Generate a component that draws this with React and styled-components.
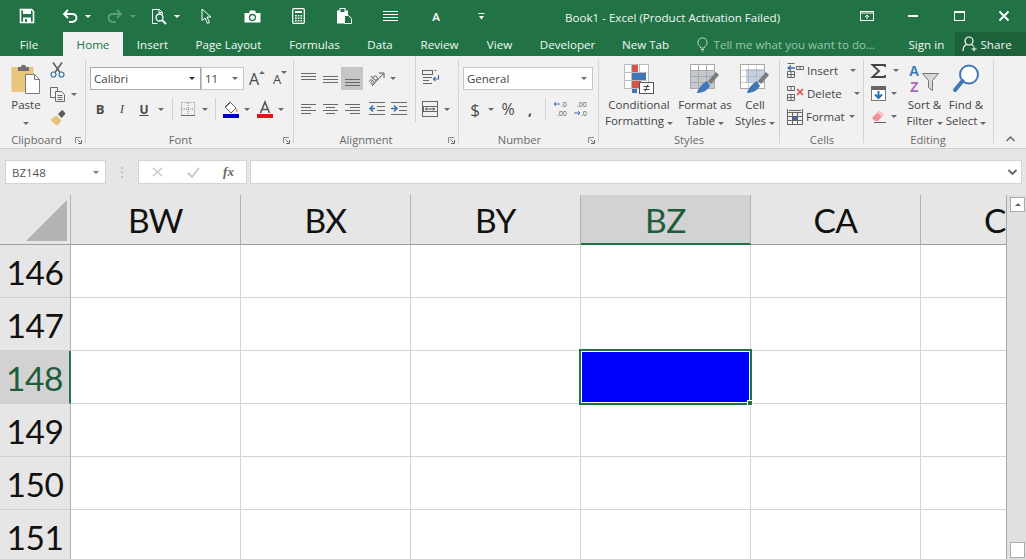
import React from "react";
import styled, { createGlobalStyle } from "styled-components";

const GlobalStyle = createGlobalStyle`
  html, body { margin: 0; padding: 0; background: #fff; overflow: hidden; }
  * { box-sizing: border-box; }
`;

const Page = styled.div`
  width: 1026px;
  height: 559px;
  display: flex;
  flex-direction: column;
  overflow: hidden;
  font-family: "Open Sans", "Noto Sans", sans-serif;
  font-size: 11.5px;
  color: #444;
`;

const TitleBar = styled.div`
  height: 32px;
  display: flex;
  align-items: center;
  background: #217346;
  padding-left: 4px;
  color: #fff;
`;

const Slot = styled.div`
  width: ${(p) => p.$w}px;
  margin-left: ${(p) => p.$ml || 0}px;
  flex: none;
  display: flex;
  justify-content: center;
  align-items: center;
  height: 100%;
  font-weight: ${(p) => (p.$bold ? 600 : 400)};
  font-size: ${(p) => p.$size || 12}px;
`;

const Title = styled.div`
  margin-left: 61px;
  font-size: 11.6px;
  white-space: nowrap;
  color: #f1f7f3;
  padding-top: 2px;
`;

const WindowButtons = styled.div`
  margin-left: auto;
  display: flex;
  height: 100%;
`;

const TabBar = styled.div`
  height: 24px;
  display: flex;
  align-items: stretch;
  background: #217346;
  color: #f2f7f4;
  font-size: 11.6px;
`;

const Tab = styled.div`
  width: ${(p) => p.$w}px;
  margin-left: ${(p) => p.$ml || 0}px;
  flex: none;
  display: flex;
  align-items: center;
  justify-content: center;
  white-space: nowrap;
  background: ${(p) => (p.$active ? "#f1f1f1" : "transparent")};
  color: ${(p) => (p.$active ? "#217346" : "inherit")};
`;

const TellMe = styled.div`
  width: 202px;
  margin-left: 14px;
  display: flex;
  align-items: center;
  gap: 6px;
  color: #9cc5ae;
  white-space: nowrap;
`;

const SignIn = styled.div`
  width: 46px;
  margin-left: 10px;
  display: flex;
  align-items: center;
  white-space: nowrap;
`;

const ShareButton = styled.div`
  flex: 1;
  display: flex;
  align-items: center;
  gap: 3px;
  padding-left: 7px;
  background: #1c6139;
  white-space: nowrap;
`;

const Ribbon = styled.div`
  height: 93px;
  display: flex;
  background: #f1f1f1;
  border-bottom: 1px solid #d0d0d0;
  box-shadow: 0 1px 1px #dcdcdc;
`;

const Group = styled.div`
  position: relative;
  width: ${(p) => p.$w}px;
  flex: none;
  display: flex;
  flex-direction: column;
  &::after {
    content: "";
    position: absolute;
    top: 4px;
    bottom: 5px;
    right: 0;
    width: 1px;
    background: #d3d3d3;
  }
`;

const GroupBody = styled.div`
  height: 76px;
  display: flex;
  padding-left: ${(p) => p.$pl || 0}px;
`;

const GroupFooter = styled.div`
  height: 16px;
  display: flex;
  align-items: center;
  padding-bottom: 2px;
  color: #6a6a6a;
  font-size: 11.2px;
`;

const GroupLabel = styled.div`
  flex: 1;
  text-align: center;
  padding-right: ${(p) => p.$pr || 0}px;
`;

const Launcher = styled.div`
  display: flex;
  margin-right: ${(p) => p.$mr || 4}px;
  margin-top: 2px;
`;

const Column = styled.div`
  display: flex;
  flex-direction: column;
  padding-top: ${(p) => p.$pt || 0}px;
  margin-left: ${(p) => p.$ml || 0}px;
  gap: ${(p) => p.$gap || 0}px;
  border-right: ${(p) => (p.$divider ? "1px solid #d3d3d3" : "none")};
  width: ${(p) => (p.$w ? `${p.$w}px` : "auto")};
  height: ${(p) => (p.$h ? `${p.$h}px` : "auto")};
`;

const Row = styled.div`
  display: flex;
  align-items: center;
  height: ${(p) => p.$h || 22}px;
  margin-top: ${(p) => p.$mt || 0}px;
`;

const Spot = styled.div`
  width: ${(p) => p.$w}px;
  height: ${(p) => (p.$fill ? "23px" : "auto")};
  flex: none;
  display: flex;
  align-items: center;
  justify-content: center;
  background: ${(p) => (p.$fill ? "#c6c6c6" : "transparent")};
  color: ${(p) => p.$color || "#4a4a4a"};
  font-size: ${(p) => p.$size || 12}px;
  font-weight: ${(p) => (p.$bold ? 700 : 400)};
  font-style: ${(p) => (p.$italic ? "italic" : "normal")};
  text-decoration: ${(p) => (p.$under ? "underline" : "none")};
  font-family: ${(p) => (p.$serif ? '"Liberation Serif", serif' : "inherit")};
`;

const Divider = styled.div`
  width: 1px;
  height: 22px;
  background: #d3d3d3;
  margin: 0 ${(p) => p.$m || 4}px;
`;

const Triangle = styled.span`
  display: inline-block;
  width: 0;
  height: 0;
  margin-left: ${(p) => p.$ml || 0}px;
  transform: translateY(${(p) => (p.$raise ? -p.$raise : 0)}px);
  border-left: 3px solid transparent;
  border-right: 3px solid transparent;
  border-top: ${(p) => (p.$up ? "none" : `3px solid ${p.$color || "#6b6b6b"}`)};
  border-bottom: ${(p) => (p.$up ? `3px solid ${p.$color || "#6b6b6b"}` : "none")};
`;

const Combo = styled.div`
  height: 23px;
  width: ${(p) => p.$w}px;
  margin-left: ${(p) => p.$ml || 0}px;
  flex: none;
  display: flex;
  align-items: center;
  justify-content: space-between;
  padding: 0 5px 0 3px;
  background: #fff;
  border: 1px solid ${(p) => p.$border || "#c6c6c6"};
  color: #444;
  font-size: 11.5px;
`;

const BigButton = styled.div`
  width: ${(p) => p.$w}px;
  flex: none;
  display: flex;
  flex-direction: column;
  align-items: center;
  line-height: 16px;
  white-space: nowrap;
`;

const BigIcon = styled.div`
  height: 30px;
  margin: 8px 0 3px;
  display: flex;
`;

const SmallItem = styled.div`
  height: 23px;
  display: flex;
  align-items: center;
  white-space: nowrap;
  gap: 3px;
`;

const ItemCaret = styled.div`
  display: flex;
  margin-left: ${(p) => p.$ml}px;
`;

const CollapseBox = styled.div`
  flex: 1;
  display: flex;
  align-items: flex-end;
  justify-content: center;
  padding-bottom: 6px;
`;

const FormulaBar = styled.div`
  height: 46px;
  flex: none;
  display: flex;
  align-items: center;
  background: #e6e6e6;
  padding: 0 4px 0 5px;
`;

const NameBox = styled.div`
  width: 101px;
  height: 24px;
  display: flex;
  align-items: center;
  justify-content: space-between;
  padding: 0 6px 0 6px;
  background: #fff;
  border: 1px solid #d4d4d4;
  font-size: 11.5px;
  color: #555;
`;

const Grip = styled.div`
  width: 32px;
  display: flex;
  justify-content: center;
`;

const FxBox = styled.div`
  width: 109px;
  height: 24px;
  display: flex;
  align-items: center;
  background: #fff;
  border: 1px solid #d4d4d4;
`;

const FormulaInput = styled.div`
  flex: 1;
  height: 24px;
  margin-left: 3px;
  display: flex;
  align-items: center;
  justify-content: flex-end;
  padding-right: 4px;
  background: #fff;
  border: 1px solid #d4d4d4;
`;

const Sheet = styled.div`
  flex: 1;
  display: flex;
  min-height: 0;
`;

const GridArea = styled.div`
  width: 1007px;
  overflow: hidden;
  border-right: 1px solid #a9a9a9;
  font-family: Lato, "Noto Sans", sans-serif;
  font-size: 33.5px;
  letter-spacing: -0.5px;
  color: #111;
`;

const HeaderRow = styled.div`
  height: 50px;
  display: flex;
  background: #e6e6e6;
  margin-right: -1px;
`;

const Corner = styled.div`
  width: 71px;
  flex: none;
  display: flex;
  align-items: flex-end;
  justify-content: flex-end;
  padding: 0 3px 3px 0;
  border-right: 1px solid #b1b1b1;
  border-bottom: 1px solid #9e9e9e;
`;

const ColHeader = styled.div`
  width: 170px;
  flex: none;
  display: flex;
  align-items: center;
  justify-content: center;
  padding-top: 1px;
  background: ${(p) => (p.$selected ? "#d2d2d2" : "transparent")};
  color: ${(p) => (p.$selected ? "#1e5c3b" : "inherit")};
  border-right: 1px solid #b1b1b1;
  border-bottom: ${(p) => (p.$selected ? "2px solid #217346" : "1px solid #9e9e9e")};
`;

const GridRow = styled.div`
  height: 53px;
  display: flex;
`;

const RowHeader = styled.div`
  width: 71px;
  flex: none;
  display: flex;
  align-items: center;
  justify-content: center;
  padding-top: 2px;
  background: ${(p) => (p.$selected ? "#d2d2d2" : "#e6e6e6")};
  color: ${(p) => (p.$selected ? "#1e5c3b" : "inherit")};
  border-right: ${(p) => (p.$selected ? "2px solid #217346" : "1px solid #b1b1b1")};
  border-bottom: 1px solid #d0d0d0;
`;

const Cell = styled.div`
  width: 170px;
  flex: none;
  position: relative;
  background: #fff;
  border-right: 1px solid #d4d4d4;
  border-bottom: 1px solid #d4d4d4;
`;

const SelectedFill = styled.div`
  position: absolute;
  top: -2px;
  left: -2px;
  right: -2px;
  bottom: -2px;
  z-index: 1;
  background: #0000ff;
  border: 2px solid #217346;
  box-shadow: inset 0 0 0 1px #fff;
`;

const FillHandle = styled.div`
  position: absolute;
  right: -3px;
  bottom: -3px;
  width: 6px;
  height: 6px;
  background: #217346;
  border: 1px solid #fff;
`;

const ScrollBar = styled.div`
  flex: 1;
  display: flex;
  flex-direction: column;
  justify-content: space-between;
  align-items: flex-end;
  padding: 2px 1px 1px 0;
  background: #e0e0e0;
`;

const ScrollButton = styled.div`
  width: 15px;
  height: ${(p) => p.$h}px;
  display: flex;
  align-items: center;
  justify-content: center;
  background: #fff;
  border: 1px solid #ababab;
`;

const Svg = ({ w, h, children, ...rest }) => (
  <svg width={w} height={h} viewBox={`0 0 ${w} ${h}`} fill="none" overflow="visible" {...rest}>
    {children}
  </svg>
);

const W = "#fff";

const SaveIcon = () => (
  <Svg w={16} h={16}>
    <path d="M1.5 1.5h11l2 2v11h-13z" stroke={W} strokeWidth="1.6" />
    <rect x="4" y="2" width="8" height="4" fill={W} />
    <rect x="4" y="9.5" width="8" height="5" fill={W} />
    <rect x="6" y="11" width="2" height="3" fill="#217346" />
  </Svg>
);

const UndoIcon = ({ color = W }) => (
  <Svg w={16} h={14}>
    <path d="M2 5h8c3 0 4.500 2 4.500 4s-2 4-4.500 4H7" stroke={color} strokeWidth="1.8" />
    <path d="M6 1L2 5l4 4" stroke={color} strokeWidth="1.8" />
  </Svg>
);

const RedoIcon = () => (
  <Svg w={16} h={14}>
    <g transform="matrix(-1 0 0 1 16 0)">
      <path d="M2 5h8c3 0 4.500 2 4.500 4s-2 4-4.500 4H7" stroke="#5d9c7b" strokeWidth="1.8" />
      <path d="M6 1L2 5l4 4" stroke="#5d9c7b" strokeWidth="1.8" />
    </g>
  </Svg>
);

const PreviewIcon = () => (
  <Svg w={16} h={17}>
    <path d="M1.500 1.500h7l3 3v2M1.500 1.500v14h5" stroke={W} />
    <circle cx="8.500" cy="9.500" r="3.500" stroke={W} strokeWidth="1.300" />
    <path d="M11 12l4 4" stroke={W} strokeWidth="1.800" />
    <path d="M8 1.500v3h3" stroke={W} />
  </Svg>
);

const PointerIcon = () => (
  <Svg w={11} h={16}>
    <path d="M1 1v11.500l3-2.500 2.500 5.500 2-1L6 9h4z" stroke={W} />
  </Svg>
);

const CameraIcon = () => (
  <Svg w={17} h={13}>
    <path d="M0.500 3H5l1-2.500h5L12 3h4.500v9.500H0.500z" fill={W} />
    <circle cx="8.500" cy="7.500" r="3" stroke="#217346" strokeWidth="1.300" />
  </Svg>
);

const CalcIcon = () => (
  <Svg w={13} h={16}>
    <rect x="0.700" y="0.700" width="11.600" height="14.600" rx="1" stroke={W} strokeWidth="1.300" />
    <rect x="3" y="3" width="7" height="2" fill={W} />
    {[7, 9.500, 12].map((y) =>
      [3, 5.700, 8.400].map((x) => <rect key={`${x}-${y}`} x={x} y={y} width="1.700" height="1.500" fill={W} />)
    )}
  </Svg>
);

const ClipIcon = () => (
  <Svg w={15} h={16}>
    <rect x="0" y="2.500" width="11" height="13" fill={W} />
    <rect x="3" y="0.500" width="5" height="4" stroke={W} fill="#217346" />
    <path d="M7.500 7.500h4l3 3v5h-7z" fill="#217346" stroke={W} />
  </Svg>
);

const StackIcon = () => (
  <Svg w={15} h={11}>
    {[0.500, 3.500, 6.500, 9.500].map((y) => (
      <path key={y} d={`M0 ${y}h15`} stroke={W} />
    ))}
  </Svg>
);

const CustomizeIcon = () => (
  <Svg w={7} h={7}>
    <path d="M0.500 0.500h6" stroke={W} />
    <path d="M1 3h5L3.500 6.500z" fill={W} />
  </Svg>
);

const RestoreRibbon = () => (
  <Svg w={14} h={10}>
    <rect x="0.500" y="0.500" width="13" height="9" stroke={W} />
    <path d="M1 2h12" stroke={W} />
    <path d="M7 8V4M5 6l2-2 2 2" stroke={W} />
  </Svg>
);

const MinIcon = () => (
  <Svg w={10} h={2}>
    <rect width="10" height="2" fill={W} />
  </Svg>
);

const MaxIcon = () => (
  <Svg w={11} h={10}>
    <rect x="0.500" y="0.500" width="10" height="9" stroke={W} />
    <rect x="0" y="0" width="11" height="2" fill={W} />
  </Svg>
);

const CloseIcon = () => (
  <Svg w={10} h={10}>
    <path d="M0.500 0.500l9 9M9.500 0.500l-9 9" stroke={W} strokeWidth="1.800" />
  </Svg>
);

const BulbIcon = () => (
  <Svg w={11} h={15}>
    <path d="M5.500 0.800a4.700 4.700 0 0 1 2.600 8.600L7.300 11H3.700l-0.800-1.600A4.700 4.700 0 0 1 5.500 0.800z" stroke="#b5d6c3" />
    <path d="M4 12.500h3M4.500 14h2" stroke="#b5d6c3" />
  </Svg>
);

const ShareIcon = () => (
  <Svg w={16} h={16}>
    <circle cx="7" cy="5" r="4" stroke={W} strokeWidth="1.200" />
    <path d="M1 15c0-4 2-6 4-6.500M9 8.500c1 0.300 2 1 2.500 1.800" stroke={W} strokeWidth="1.200" />
    <path d="M12 10.500v5M9.500 13h5" stroke={W} />
  </Svg>
);

const PasteIcon = () => (
  <Svg w={30} h={30}>
    <rect x="0.500" y="3" width="22" height="25" fill="#e9c57e" />
    <path d="M7 3h3c0-3 5-3 5 0h3v4H7z" fill="#6f6f6f" />
    <path d="M14.500 10.500h9l5 5v14h-14z" fill="#fff" stroke="#7a7a7a" />
    <path d="M23.500 10.500v5h5" stroke="#7a7a7a" />
  </Svg>
);

const CutIcon = () => (
  <Svg w={15} h={16}>
    <path d="M3 0.500l7 10M12 0.500l-7 10" stroke="#5a5a5a" strokeWidth="1.500" />
    <circle cx="3.500" cy="12.500" r="2.500" stroke="#3f72a8" strokeWidth="1.200" />
    <circle cx="11.500" cy="12.500" r="2.500" stroke="#3f72a8" strokeWidth="1.200" />
  </Svg>
);

const CopyIcon = () => (
  <Svg w={15} h={15}>
    <path d="M0.500 0.500h7v10h-7z" stroke="#6a6a6a" fill="#f1f1f1" />
    <path d="M5.500 4.500h6l3 3v7h-9z" stroke="#6a6a6a" fill="#f1f1f1" />
    <path d="M7.500 8.500h5M7.500 10.500h5M7.500 12.500h5" stroke="#6a6a6a" />
  </Svg>
);

const PainterIcon = () => (
  <Svg w={16} h={16}>
    <path d="M0.500 9.500l6-4 5 5-4 5c-3-1-5-3-7-6z" fill="#e8c27c" />
    <path d="M8 4l3-3 1.500-1 3 3.500-1 1.500-3 3z" fill="#5c5c5c" />
  </Svg>
);

const BordersIcon = () => (
  <Svg w={14} h={14}>
    <rect x="0.500" y="0.500" width="13" height="13" stroke="#8a8a8a" strokeDasharray="1 1" />
    <path d="M7 1v12M1 7h12" stroke="#8a8a8a" strokeDasharray="1 1" />
    <path d="M0 13.500h14" stroke="#6a6a6a" />
  </Svg>
);

const FillIcon = () => (
  <Svg w={16} h={17}>
    <path d="M7 1l6 6-5 5-6-6z" stroke="#666" fill="#fff" />
    <path d="M3 6L7 2" stroke="#666" />
    <path d="M13 7c2 2 2 4 1 4s-1-2-1-4z" fill="#e0a030" />
    <rect x="0" y="13" width="16" height="4" fill="#0000cc" />
  </Svg>
);

const FontColorIcon = () => (
  <Svg w={16} h={17}>
    <path d="M3.500 12L8 1l4.500 11M5 8.500h6" stroke="#555" strokeWidth="1.600" />
    <rect x="0" y="13" width="16" height="4" fill="#e8101a" />
  </Svg>
);

const LinesIcon = ({ rows, w = 15, h = 14, color = "#6a6a6a" }) => (
  <Svg w={w} h={h}>
    {rows.map(([x1, x2, y]) => (
      <path key={`${x1}-${y}`} d={`M${x1} ${y}.5H${x2}`} stroke={color} />
    ))}
  </Svg>
);

const OrientationIcon = () => (
  <Svg w={17} h={16}>
    <text x="1" y="12" fontSize="9" fill="#555" fontFamily="Open Sans" transform="rotate(-45 5 10)">ab</text>
    <path d="M4 15L15 3M11 2h5v5" stroke="#555" />
  </Svg>
);

const IndentIcon = ({ flip }) => (
  <Svg w={16} h={14}>
    <path d="M0 0.500h16M8 4.500h8M8 8.500h8M0 12.500h16" stroke="#6a6a6a" />
    {flip ? (
      <path d="M0 6.500h5M3 3.500l3 3-3 3" stroke="#3f6fa8" strokeWidth="1.500" />
    ) : (
      <path d="M6 6.500H1M4 3.500l-3 3 3 3" stroke="#3f6fa8" strokeWidth="1.500" />
    )}
  </Svg>
);

const WrapIcon = () => (
  <Svg w={18} h={16}>
    <rect x="0.500" y="0.500" width="10" height="4" stroke="#666" />
    <path d="M1 7.500h9M1 10.500h6M1 13.500h9M12.500 0.500h2" stroke="#666" />
    <path d="M16.500 5v4h-5M13.500 7l-2 2 2 2" stroke="#3f6fa8" strokeWidth="1.200" />
  </Svg>
);

const MergeIcon = () => (
  <Svg w={16} h={16}>
    <rect x="0.500" y="0.500" width="15" height="15" stroke="#666" />
    <path d="M1 5.500h14M1 10.500h14" stroke="#666" />
    <path d="M3 8h10M5 6.500L3.500 8 5 9.500M11 6.500L12.500 8 11 9.500" stroke="#555" />
    <rect x="1" y="6" width="1" height="4" fill="#666" />
  </Svg>
);

const DecimalIcon = ({ top, bottom, arrowTop }) => (
  <Svg w={18} h={18}>
    <text x={arrowTop ? 8 : 4} y="6.500" fontSize="7" fill="#555" fontFamily="Open Sans">{top}</text>
    <text x={arrowTop ? 4 : 8} y="16" fontSize="7" fill="#555" fontFamily="Open Sans">{bottom}</text>
    {arrowTop ? (
      <path d="M7 4H1M3 2L1 4l2 2" stroke="#3f6fa8" />
    ) : (
      <path d="M1 13h6M5 11l2 2-2 2" stroke="#3f6fa8" />
    )}
  </Svg>
);

const ConditionalIcon = () => (
  <Svg w={30} h={30}>
    <rect x="0.500" y="0.500" width="24" height="24" fill="#fff" stroke="#bcbcbc" />
    <path d="M7.500 0v25M15.500 0v25M23 8.500H0M23 16.500H0" stroke="#bcbcbc" />
    <rect x="8" y="1" width="6" height="7" fill="#d9534a" />
    <rect x="8" y="9" width="14" height="7" fill="#3f78b5" />
    <rect x="8" y="17" width="9" height="7" fill="#d9534a" />
    <rect x="8" y="25" width="5" height="4" fill="#3f78b5" />
    <rect x="15.500" y="18.500" width="14" height="11" fill="#fff" stroke="#555" />
    <path d="M19.500 22.500h6M19.500 25.500h6M24 20.500l-3 7" stroke="#444" />
  </Svg>
);

const TableBrushIcon = ({ tint = "#c3c9cf", full }) => (
  <Svg w={30} h={30}>
    <rect x="0.500" y="0.500" width="24" height="24" fill="#fff" stroke="#a8a8a8" />
    <rect x={full ? 6 : 1} y={full ? 5 : 7} width={full ? 18 : 23} height={full ? 14 : 17} fill={tint} />
    <path d="M8.500 0v25M16.500 0v25M0 6.500h25M0 12.500h25M0 18.500h25" stroke="#a8a8a8" strokeOpacity={full ? 0.5 : 1} />
    <path d="M18 17l8-9 3 3-8 9z" fill="#7b7b7b" />
    <path d="M17 17c-3 2-8 5-10 12 5 0 10-2 13-7z" fill="#3f78b5" />
  </Svg>
);

const InsertCellsIcon = () => (
  <Svg w={17} h={15}>
    <path d="M0.500 8.500h7v6h-7zM4 8.500v6M0.500 11.500h7M9.500 3.500h7v3h-7zM13 3.500v3" stroke="#666" fill="none" />
    <path d="M8 5H1M4 2.500L1 5l3 2.500" stroke="#3f6fa8" strokeWidth="1.300" />
    <path d="M0.500 0.500h7" stroke="#666" />
  </Svg>
);

const DeleteCellsIcon = () => (
  <Svg w={17} h={15}>
    <path d="M0.500 8.500h7v6h-7zM4 8.500v6M0.500 11.500h7M0.500 0.500h7v4h-7zM4 0.500v4" stroke="#666" />
    <path d="M10 3l6 6M16 3l-6 6" stroke="#d9534a" strokeWidth="1.700" />
  </Svg>
);

const FormatCellsIcon = () => (
  <Svg w={16} h={16}>
    <rect x="0.500" y="3.500" width="15" height="12" stroke="#666" />
    <path d="M0 7.500h16M0 11.500h16M5.500 3v13M10.500 3v13" stroke="#666" />
    <rect x="6" y="8" width="4" height="3" fill="#3f6fa8" />
    <path d="M0.500 0v3M15.500 0v3M2 1.500h12" stroke="#666" />
  </Svg>
);

const SigmaIcon = () => (
  <Svg w={15} h={14}>
    <path d="M14 3V1H1.500L8 7l-6.500 6H14v-2" stroke="#444" strokeWidth="1.800" />
  </Svg>
);

const FillDownIcon = () => (
  <Svg w={15} h={15}>
    <rect x="0.500" y="0.500" width="14" height="14" fill="#fff" stroke="#777" />
    <rect x="0" y="0" width="15" height="4" fill="#666" />
    <path d="M7.500 5v7M4 8.500l3.500 3.500L11 8.500" stroke="#2f6fb0" strokeWidth="2" />
  </Svg>
);

const EraserIcon = () => (
  <Svg w={15} h={13}>
    <path d="M1 8l7-7 5 3-6 7H4z" fill="#ef8f9a" />
    <path d="M8 1l5 3-2 2.500L6 3z" fill="#f7c5ca" />
    <path d="M3 12.500h12" stroke="#666" />
  </Svg>
);

const SortIcon = () => (
  <Svg w={31} h={29}>
    <text x="0" y="12" fontSize="14" fontWeight="700" fill="#3f78b5" fontFamily="Liberation Sans">A</text>
    <text x="1" y="28" fontSize="14" fontWeight="700" fill="#a968b8" fontFamily="Liberation Sans">Z</text>
    <path d="M13.500 9.500h16l-6 7v10l-4-3v-7z" fill="#d8d8d8" stroke="#777" />
  </Svg>
);

const FindIcon = () => (
  <Svg w={27} h={29}>
    <circle cx="16" cy="10.500" r="9" stroke="#3f78b5" strokeWidth="2" fill="#fff" />
    <path d="M9.500 17L2 26" stroke="#3f78b5" strokeWidth="4" strokeLinecap="round" />
  </Svg>
);

const LauncherIcon = () => (
  <Svg w={7} h={7}>
    <path d="M0.500 6V0.500H6" stroke="#8a8a8a" />
    <path d="M2.500 2.500l3 3M6.500 3v3.500H3" stroke="#6a6a6a" />
  </Svg>
);

const ChevronUp = () => (
  <Svg w={9} h={6}>
    <path d="M0.500 5L4.500 1l4 4" stroke="#666" strokeWidth="1.500" />
  </Svg>
);

const ChevronDown = () => (
  <Svg w={9} h={6}>
    <path d="M0.500 1l4 4 4-4" stroke="#666" strokeWidth="1.800" />
  </Svg>
);

const Footer = ({ label, pr, launcher }) => (
  <GroupFooter>
    <GroupLabel $pr={pr}>{label}</GroupLabel>
    {launcher && (
      <Launcher>
        <LauncherIcon />
      </Launcher>
    )}
  </GroupFooter>
);

const Big = ({ w, icon, line1, line2, caret }) => (
  <BigButton $w={w}>
    <BigIcon>{icon}</BigIcon>
    <div>{line1}</div>
    <div>
      {line2}
      {caret && <Triangle $ml={line2 ? 3 : 0} />}
    </div>
  </BigButton>
);

const columns = ["BW", "BX", "BY", "BZ", "CA", "CB"];
const rows = [146, 147, 148, 149, 150, 151];
const SELECTED_COL = "BZ";
const SELECTED_ROW = 148;

const tabs = [
  ["Insert", 58, 0.5],
  ["Page Layout", 94],
  ["Formulas", 78],
  ["Data", 53],
  ["Review", 66],
  ["View", 54],
  ["Developer", 82],
  ["New Tab", 74],
];

export default function App() {
  return (
    <Page>
      <GlobalStyle />
      <TitleBar>
        <Slot $w={46}><SaveIcon /></Slot>
        <Slot $w={26} $ml={7}><UndoIcon /></Slot>
        <Slot $w={10}><Triangle $color="#fff" /></Slot>
        <Slot $w={26} $ml={9}><RedoIcon /></Slot>
        <Slot $w={10}><Triangle $color="#5d9c7b" /></Slot>
        <Slot $w={26} $ml={8}><PreviewIcon /></Slot>
        <Slot $w={10}><Triangle $color="#fff" /></Slot>
        <Slot $w={46} $ml={1}><PointerIcon /></Slot>
        <Slot $w={46}><CameraIcon /></Slot>
        <Slot $w={46}><CalcIcon /></Slot>
        <Slot $w={46}><ClipIcon /></Slot>
        <Slot $w={46}><StackIcon /></Slot>
        <Slot $w={46} $bold $size={11.5}>A</Slot>
        <Slot $w={45}><CustomizeIcon /></Slot>
        <Title>Book1 - Excel (Product Activation Failed)</Title>
        <WindowButtons>
          <Slot $w={46}><RestoreRibbon /></Slot>
          <Slot $w={46}><MinIcon /></Slot>
          <Slot $w={46}><MaxIcon /></Slot>
          <Slot $w={44}><CloseIcon /></Slot>
        </WindowButtons>
      </TitleBar>

      <TabBar>
        <Tab $w={58}>File</Tab>
        <Tab $w={60} $ml={5} $active>Home</Tab>
        {tabs.map(([name, width, ml]) => (
          <Tab key={name} $w={width} $ml={ml}>{name}</Tab>
        ))}
        <TellMe>
          <BulbIcon />
          Tell me what you want to do...
        </TellMe>
        <SignIn>Sign in</SignIn>
        <ShareButton>
          <ShareIcon />
          Share
        </ShareButton>
      </TabBar>

      <Ribbon>
        <Group $w={86}>
          <GroupBody $pl={5}>
            <Big w={42} icon={<PasteIcon />} line1="Paste" caret />
            <Column $pt={6} $ml={3} $gap={8}>
              <Row $h={16}><CutIcon /></Row>
              <Row $h={16}><CopyIcon /><Triangle $ml={6} /></Row>
              <Row $h={16}><PainterIcon /></Row>
            </Column>
          </GroupBody>
          <Footer label="Clipboard" pr={2} launcher />
        </Group>

        <Group $w={208}>
          <GroupBody $pl={4}>
            <Column $pt={11}>
              <Row $h={23}>
                <Combo $w={111} $border="#ababab">Calibri<Triangle $color="#333" /></Combo>
                <Combo $w={43}>11<Triangle /></Combo>
                <Spot $w={26} $size={16}>A<Triangle $up $raise={6} /></Spot>
                <Spot $w={20} $size={13}>A<Triangle $raise={6} /></Spot>
              </Row>
              <Row $h={22} $mt={8}>
                <Spot $w={20} $bold $size={13}>B</Spot>
                <Spot $w={24} $italic $size={13} $serif>I</Spot>
                <Spot $w={20} $under $bold $size={12}>U</Spot>
                <Spot $w={14}><Triangle /></Spot>
                <Divider $m={4} />
                <Spot $w={22}><BordersIcon /></Spot>
                <Spot $w={12}><Triangle /></Spot>
                <Divider $m={4} />
                <Spot $w={22}><FillIcon /></Spot>
                <Spot $w={10}><Triangle /></Spot>
                <Spot $w={26}><FontColorIcon /></Spot>
                <Spot $w={6}><Triangle /></Spot>
              </Row>
            </Column>
          </GroupBody>
          <Footer label="Font" pr={8} launcher />
        </Group>

        <Group $w={165}>
          <GroupBody $pl={3}>
            <Column $pt={11} $w={119} $h={66} $divider>
              <Row $h={23}>
                <Spot $w={22}><LinesIcon rows={[[0, 15, 1], [0, 15, 4], [0, 15, 7]]} /></Spot>
                <Spot $w={22}><LinesIcon rows={[[0, 15, 4], [0, 15, 7], [0, 15, 10]]} /></Spot>
                <Spot $w={22} $fill><LinesIcon rows={[[0, 15, 7], [0, 15, 10], [0, 15, 13]]} /></Spot>
                <Spot $w={26}><OrientationIcon /></Spot>
                <Spot $w={8}><Triangle /></Spot>
              </Row>
              <Row $h={22} $mt={8}>
                <Spot $w={22}><LinesIcon rows={[[0, 15, 1], [0, 10, 4], [0, 15, 7], [0, 10, 10]]} h={12} /></Spot>
                <Spot $w={22}><LinesIcon rows={[[0, 15, 1], [3, 12, 4], [0, 15, 7], [3, 12, 10]]} h={12} /></Spot>
                <Spot $w={22}><LinesIcon rows={[[0, 15, 1], [5, 15, 4], [0, 15, 7], [5, 15, 10]]} h={12} /></Spot>
                <Spot $w={28}><IndentIcon /></Spot>
                <Spot $w={16}><IndentIcon flip /></Spot>
              </Row>
            </Column>
            <Column $pt={13} $ml={6}>
              <Row $h={18}><WrapIcon /></Row>
              <Row $h={18} $mt={13}><MergeIcon /><Triangle $ml={6} /></Row>
            </Column>
          </GroupBody>
          <Footer label="Alignment" pr={10} launcher />
        </Group>

        <Group $w={140}>
          <GroupBody $pl={4}>
            <Column $pt={11}>
              <Row $h={23}>
                <Combo $w={130}>General<Triangle /></Combo>
              </Row>
              <Row $h={22} $mt={8}>
                <Spot $w={24} $size={17}>$</Spot>
                <Spot $w={8}><Triangle /></Spot>
                <Spot $w={26} $size={16}>%</Spot>
                <Spot $w={18} $size={14} $bold>,</Spot>
                <Divider $m={6} />
                <Spot $w={19}><DecimalIcon top=".0" bottom=".00" arrowTop /></Spot>
                <Spot $w={22}><DecimalIcon top=".00" bottom=".0" /></Spot>
              </Row>
            </Column>
          </GroupBody>
          <Footer label="Number" pr={8} launcher />
        </Group>

        <Group $w={181}>
          <GroupBody $pl={6}>
            <Big w={68} icon={<ConditionalIcon />} line1="Conditional" line2="Formatting" caret />
            <Big w={64} icon={<TableBrushIcon />} line1="Format as" line2="Table" caret />
            <Big w={36} icon={<TableBrushIcon tint="#c5d0e0" full />} line1="Cell" line2="Styles" caret />
          </GroupBody>
          <Footer label="Styles" pr={1} />
        </Group>

        <Group $w={84}>
          <GroupBody $pl={7}>
            <Column $pt={3}>
              <SmallItem><InsertCellsIcon />Insert<ItemCaret $ml={9}><Triangle /></ItemCaret></SmallItem>
              <SmallItem><DeleteCellsIcon />Delete<ItemCaret $ml={9}><Triangle /></ItemCaret></SmallItem>
              <SmallItem><FormatCellsIcon />Format<ItemCaret $ml={1}><Triangle /></ItemCaret></SmallItem>
            </Column>
          </GroupBody>
          <Footer label="Cells" />
        </Group>

        <Group $w={130}>
          <GroupBody $pl={7}>
            <Column $pt={3} $w={33}>
              <SmallItem><SigmaIcon /><ItemCaret $ml={4}><Triangle /></ItemCaret></SmallItem>
              <SmallItem><FillDownIcon /><ItemCaret $ml={2}><Triangle /></ItemCaret></SmallItem>
              <SmallItem><EraserIcon /><ItemCaret $ml={2}><Triangle /></ItemCaret></SmallItem>
            </Column>
            <Big w={41} icon={<SortIcon />} line1="Sort &" line2="Filter" caret />
            <Big w={42} icon={<FindIcon />} line1="Find &" line2="Select" caret />
          </GroupBody>
          <Footer label="Editing" pr={2} />
        </Group>

        <CollapseBox>
          <ChevronUp />
        </CollapseBox>
      </Ribbon>

      <FormulaBar>
        <NameBox>BZ148<Triangle $color="#777" /></NameBox>
        <Grip>
          <Svg w={2} h={11}>
            <path d="M1 0v2M1 4.500v2M1 9v2" stroke="#b5b5b5" strokeWidth="1.500" />
          </Svg>
        </Grip>
        <FxBox>
          <Spot $w={36}>
            <Svg w={11} h={10}><path d="M1 1l9 8M10 1l-9 8" stroke="#c6c6c6" strokeWidth="1.300" /></Svg>
          </Spot>
          <Spot $w={36}>
            <Svg w={13} h={11}><path d="M1 6l4 4 7-9" stroke="#c6c6c6" strokeWidth="1.800" /></Svg>
          </Spot>
          <Spot $w={35} $italic $serif $bold $size={13} $color="#666">fx</Spot>
        </FxBox>
        <FormulaInput>
          <ChevronDown />
        </FormulaInput>
      </FormulaBar>

      <Sheet>
        <GridArea>
          <HeaderRow>
            <Corner>
              <Svg w={41} h={41}><path d="M41 0v41H0z" fill="#b4b4b4" /></Svg>
            </Corner>
            {columns.map((col) => (
              <ColHeader key={col} $selected={col === SELECTED_COL}>{col}</ColHeader>
            ))}
          </HeaderRow>
          {rows.map((row) => (
            <GridRow key={row}>
              <RowHeader $selected={row === SELECTED_ROW}>{row}</RowHeader>
              {columns.map((col) => (
                <Cell key={col}>
                  {col === SELECTED_COL && row === SELECTED_ROW && (
                    <SelectedFill>
                      <FillHandle />
                    </SelectedFill>
                  )}
                </Cell>
              ))}
            </GridRow>
          ))}
        </GridArea>
        <ScrollBar>
          <ScrollButton $h={15}><Triangle $up $color="#666" /></ScrollButton>
          <ScrollButton $h={16} />
        </ScrollBar>
      </Sheet>
    </Page>
  );
}
